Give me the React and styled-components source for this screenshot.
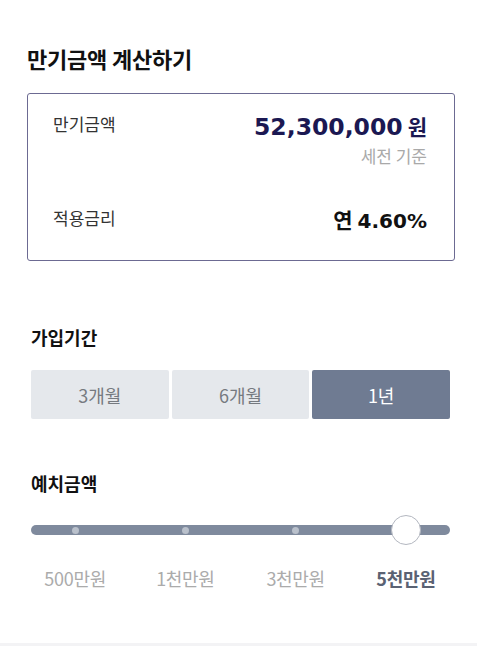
import React, { useState } from "react";
import styled, { createGlobalStyle } from "styled-components";

const GlobalStyle = createGlobalStyle`
  body {
    margin: 0;
    background: #ffffff;
    font-family: "Noto Sans CJK KR", "Noto Sans", sans-serif;
    color: #222;
  }
`;

const Page = styled.div`
  width: 477px;
  height: 646px;
  display: flex;
  flex-direction: column;
  overflow: hidden;
`;

const Title = styled.h1`
  margin: 43px 0 0 27px;
  font-size: 22px;
  line-height: 30px;
  font-weight: 700;
  color: #111;
  letter-spacing: -0.2px;
`;

const ResultCard = styled.div`
  margin: 20px 22px 0 27px;
  height: 168px;
  box-sizing: border-box;
  border: 1.5px solid #6c6a92;
  border-radius: 3px;
  padding: 18px 27px 0 25px;
  display: flex;
  flex-direction: column;
`;

const Row = styled.div`
  display: flex;
  justify-content: space-between;
  align-items: flex-start;
  margin-top: ${(p) => p.$gap || 0}px;
`;

const Label = styled.span`
  font-size: 17px;
  line-height: 24px;
  color: #333;
`;

const ValueCol = styled.div`
  display: flex;
  flex-direction: column;
  align-items: flex-end;
`;

const Amount = styled.div`
  font-family: "DejaVu Sans", "Noto Sans CJK KR", sans-serif;
  font-size: 23.5px;
  line-height: 28px;
  font-weight: 700;
  color: #1b1852;
  display: flex;
  align-items: baseline;
  gap: 5px;
`;

const Unit = styled.span`
  font-family: "Noto Sans CJK KR", sans-serif;
  font-size: 21px;
`;

const Note = styled.span`
  margin-top: 4px;
  font-size: 17px;
  line-height: 22px;
  color: #a9a9a9;
`;

const Rate = styled.div`
  font-family: "DejaVu Sans", "Noto Sans CJK KR", sans-serif;
  font-size: 20px;
  line-height: 26px;
  font-weight: 700;
  color: #111;
  display: flex;
  align-items: baseline;
  gap: 5px;
`;

const RatePrefix = styled.span`
  font-family: "Noto Sans CJK KR", sans-serif;
  font-size: 21px;
`;

const Section = styled.section`
  margin: ${(p) => p.$top}px 27px 0 31px;
`;

const SectionTitle = styled.h2`
  margin: 0;
  font-size: 18px;
  line-height: 26px;
  font-weight: 700;
  color: #111;
`;

const Segments = styled.div`
  margin-top: 20px;
  display: grid;
  grid-template-columns: repeat(3, 1fr);
  gap: 3px;
`;

const Segment = styled.button`
  height: 49px;
  border: none;
  border-radius: 2px;
  padding: 0;
  font-family: "Noto Sans CJK KR", sans-serif;
  font-size: 18px;
  color: ${(p) => (p.$active ? "#ffffff" : "#767a80")};
  background: ${(p) => (p.$active ? "#6f7b92" : "#e5e8ec")};
  cursor: pointer;
`;

const Rail = styled.div`
  position: relative;
  margin: 18px -11px 0;
  height: 32px;
  display: grid;
  grid-template-columns: repeat(4, 1fr);
  align-items: center;
  justify-items: center;
`;

const Track = styled.div`
  position: absolute;
  left: 11px;
  right: 11px;
  top: 11px;
  height: 10px;
  border-radius: 5px;
  background: #7f8a9d;
`;

const Dot = styled.span`
  position: relative;
  width: 7px;
  height: 7px;
  border-radius: 50%;
  background: #b9c0cb;
`;

const Thumb = styled.span`
  position: relative;
  width: 28px;
  height: 28px;
  border-radius: 50%;
  background: #ffffff;
  border: 1.5px solid #b3b7c0;
`;

const Ticks = styled.div`
  margin: 19px -11px 0;
  display: grid;
  grid-template-columns: repeat(4, 1fr);
`;

const Tick = styled.span`
  text-align: center;
  font-size: 18px;
  line-height: 26px;
  letter-spacing: -0.3px;
  font-weight: ${(p) => (p.$active ? 700 : 400)};
  color: ${(p) => (p.$active ? "#5a6273" : "#ababab")};
`;

const Footer = styled.div`
  margin-top: auto;
  height: 3px;
  background: #f3f3f5;
`;

const periods = ["3개월", "6개월", "1년"];
const amounts = ["500만원", "1천만원", "3천만원", "5천만원"];

export default function App() {
  const [period, setPeriod] = useState(2);
  const [amount, setAmount] = useState(3);

  return (
    <Page>
      <GlobalStyle />
      <Title>만기금액 계산하기</Title>
      <ResultCard>
        <Row>
          <Label>만기금액</Label>
          <ValueCol>
            <Amount>
              52,300,000<Unit>원</Unit>
            </Amount>
            <Note>세전 기준</Note>
          </ValueCol>
        </Row>
        <Row $gap={39}>
          <Label>적용금리</Label>
          <Rate>
            <RatePrefix>연</RatePrefix>4.60%
          </Rate>
        </Row>
      </ResultCard>

      <Section $top={63}>
        <SectionTitle>가입기간</SectionTitle>
        <Segments>
          {periods.map((p, i) => (
            <Segment key={p} $active={i === period} onClick={() => setPeriod(i)}>
              {p}
            </Segment>
          ))}
        </Segments>
      </Section>

      <Section $top={51}>
        <SectionTitle>예치금액</SectionTitle>
        <Rail>
          <Track />
          {amounts.map((a, i) =>
            i === amount ? <Thumb key={a} /> : <Dot key={a} onClick={() => setAmount(i)} />
          )}
        </Rail>
        <Ticks>
          {amounts.map((a, i) => (
            <Tick key={a} $active={i === amount} onClick={() => setAmount(i)}>
              {a}
            </Tick>
          ))}
        </Ticks>
      </Section>
      <Footer />
    </Page>
  );
}
